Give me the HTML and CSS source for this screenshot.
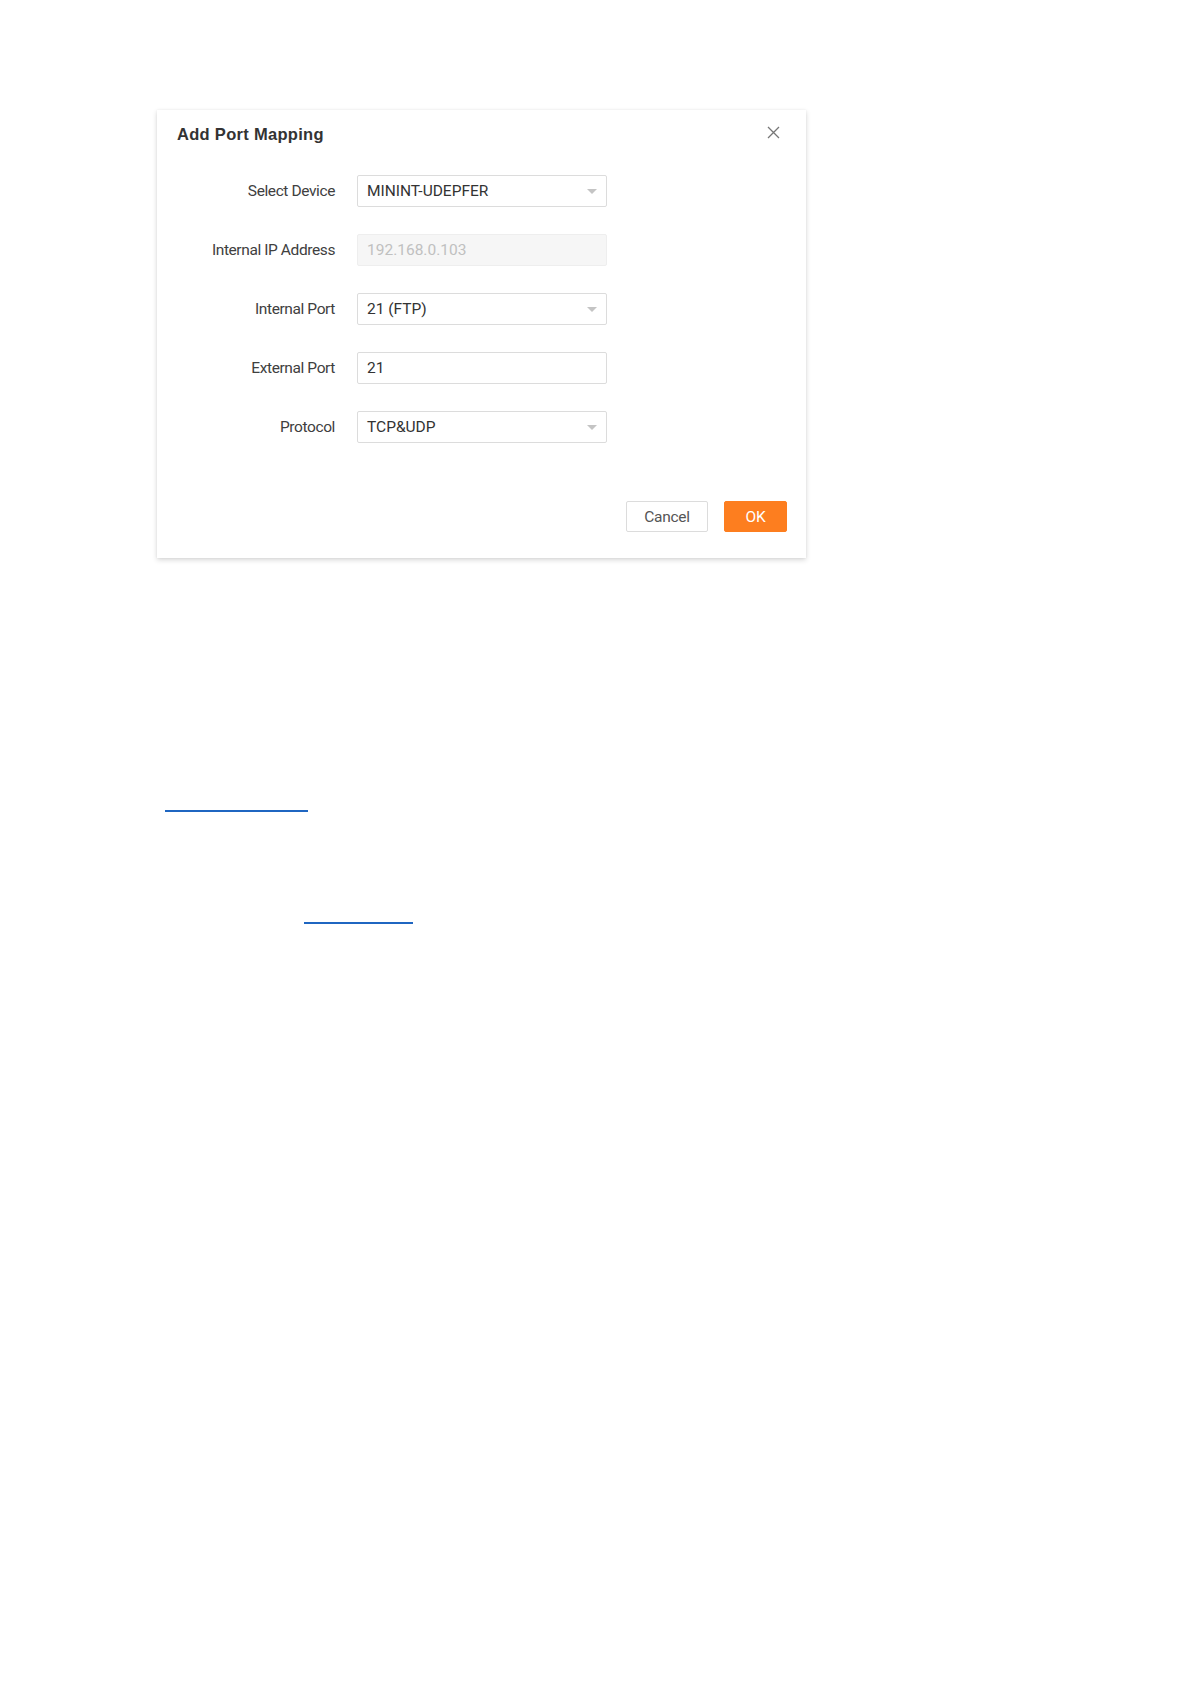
FILE: index.html
```html
<!DOCTYPE html>
<html>
<head>
<meta charset="utf-8">
<link rel="stylesheet" href="styles.css">
</head>
<body>
<div class="page">
  <div class="dialog">
    <div class="dialog-header">
      <div class="dialog-title">Add Port Mapping</div>
      <div class="close">
        <svg width="13" height="13" viewBox="0 0 13 13"><path d="M1 1 L12 12 M12 1 L1 12" stroke="#777" stroke-width="1.3" fill="none"/></svg>
      </div>
    </div>
    <div class="form">
      <div class="row">
        <div class="label">Select Device</div>
        <div class="field select"><span>MININT-UDEPFER</span><i class="caret"></i></div>
      </div>
      <div class="row">
        <div class="label">Internal IP Address</div>
        <div class="field disabled"><span>192.168.0.103</span></div>
      </div>
      <div class="row">
        <div class="label">Internal Port</div>
        <div class="field select"><span>21 (FTP)</span><i class="caret"></i></div>
      </div>
      <div class="row">
        <div class="label">External Port</div>
        <div class="field"><span>21</span></div>
      </div>
      <div class="row">
        <div class="label">Protocol</div>
        <div class="field select"><span>TCP&amp;UDP</span><i class="caret"></i></div>
      </div>
    </div>
    <div class="footer">
      <button class="btn btn-cancel">Cancel</button>
      <button class="btn btn-ok">OK</button>
    </div>
  </div>
  <div class="link-line line-one"></div>
  <div class="link-line line-two"></div>
</div>
</body>
</html>
```
FILE: styles.css
```css
html, body {
  margin: 0;
  padding: 0;
  background: #ffffff;
}
.page {
  padding-top: 110px;
  padding-left: 157px;
  font-family: Roboto, "Liberation Sans", Arial, sans-serif;
}
.dialog {
  width: 649px;
  height: 448px;
  box-sizing: border-box;
  background: #fff;
  box-shadow: 0 2px 5px rgba(0,0,0,0.16), 0 0 2px rgba(0,0,0,0.06);
  display: flex;
  flex-direction: column;
}
.dialog-header {
  display: flex;
  justify-content: space-between;
  align-items: center;
  padding: 14px 26px 0 20px;
}
.dialog-title {
  font-family: "Liberation Sans", Arial, sans-serif;
  font-weight: bold;
  font-size: 16.5px;
  line-height: 20px;
  color: #333;
  letter-spacing: 0.3px;
}
.close {
  width: 13px;
  height: 13px;
  display: flex;
  margin-top: -4px;
}
.form {
  margin-top: 31px;
  display: flex;
  flex-direction: column;
  gap: 27px;
}
.row {
  display: flex;
  align-items: center;
  height: 32px;
}
.label {
  width: 178px;
  text-align: right;
  font-size: 15.5px;
  color: #404040;
  letter-spacing: -0.4px;
}
.field {
  margin-left: 22px;
  width: 250px;
  height: 32px;
  box-sizing: border-box;
  border: 1px solid #dcdcdc;
  border-radius: 2px;
  display: flex;
  align-items: center;
  justify-content: space-between;
  padding: 0 9px 0 9px;
  font-size: 15.5px;
  color: #333;
  letter-spacing: 0;
}
.field.disabled {
  background: #f6f6f6;
  border-color: #eeeeee;
  color: #c0c0c0;
}
.caret {
  width: 0;
  height: 0;
  border-left: 5px solid transparent;
  border-right: 5px solid transparent;
  border-top: 5px solid #c4c4c4;
}
.footer {
  margin-top: 58px;
  display: flex;
  justify-content: flex-end;
  gap: 16px;
  padding-right: 19px;
}
.btn {
  height: 31px;
  font-family: Roboto, "Liberation Sans", Arial, sans-serif;
  font-size: 15.5px;
  border-radius: 2px;
  letter-spacing: -0.3px;
}
.btn-cancel {
  width: 82px;
  background: #fff;
  border: 1px solid #dcdcdc;
  color: #555;
}
.btn-ok {
  width: 63px;
  background: #fd7e1f;
  border: 1px solid #fd7e1f;
  color: #fff;
}
.link-line {
  height: 2px;
  background: #1f66c1;
}
.line-one {
  margin-top: 252px;
  margin-left: 8px;
  width: 143px;
}
.line-two {
  margin-top: 110px;
  margin-left: 147px;
  width: 109px;
}
```
